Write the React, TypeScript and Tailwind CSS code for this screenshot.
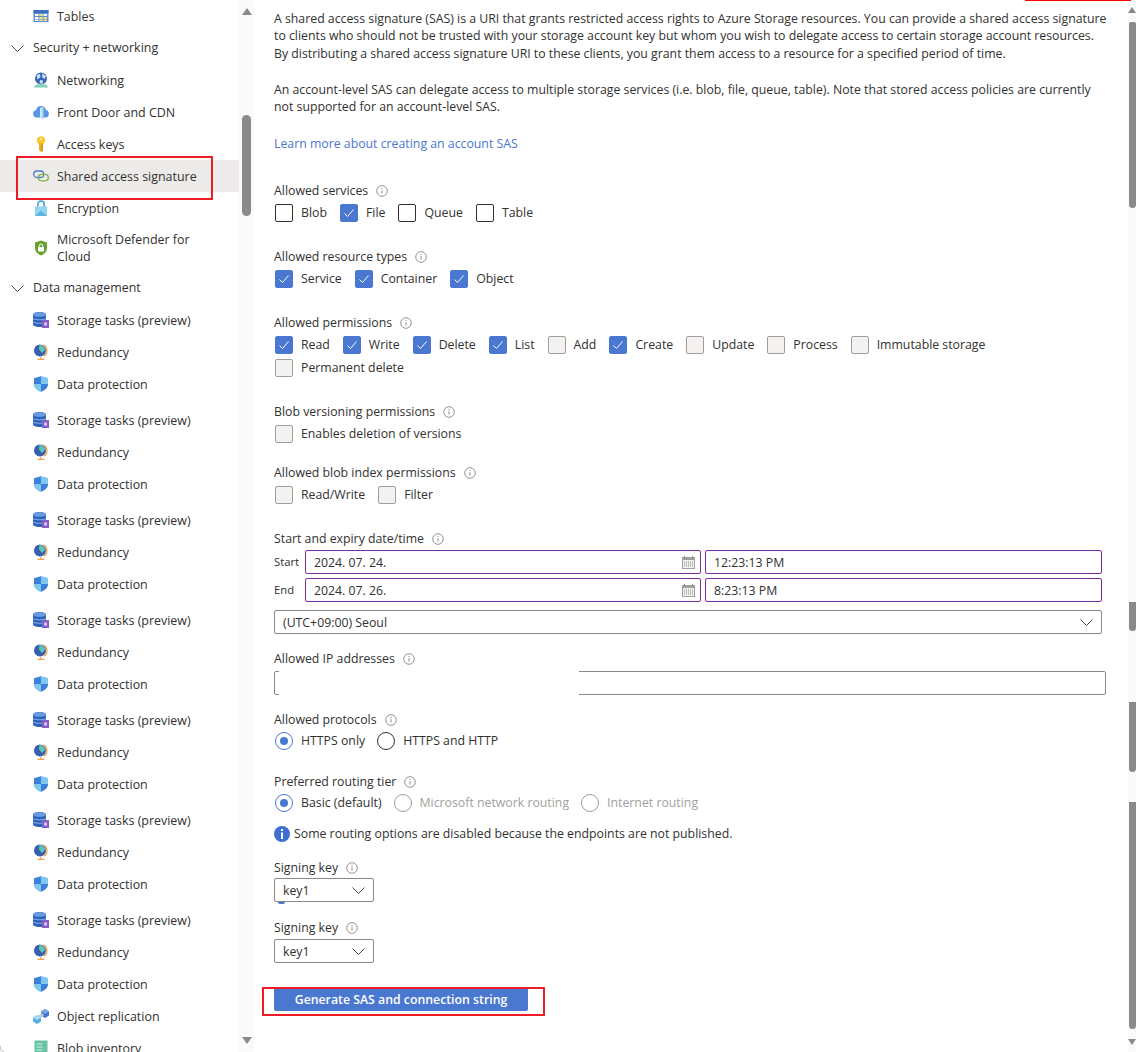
import React from 'react';

const font = "font-['Open_Sans','Liberation_Sans',sans-serif]";

function TablesIcon() {
  return (
    <svg width="16" height="16" viewBox="0 0 16 16">
      <rect x="0.500" y="2" width="15" height="12" fill="#5b8fd8" />
      <rect x="0.500" y="2" width="15" height="3" fill="#3f6fc4" />
      <g fill="#fff">
        <rect x="2" y="6" width="3.500" height="2" />
        <rect x="10.500" y="6" width="3.500" height="2" />
        <rect x="2" y="9" width="3.500" height="2" />
        <rect x="2" y="11.500" width="3.500" height="1.500" />
      </g>
      <g fill="#f5dd7a">
        <rect x="6.200" y="6" width="3.600" height="2" />
        <rect x="6.200" y="9" width="3.600" height="2" />
        <rect x="10.500" y="9" width="3.500" height="2" />
        <rect x="6.200" y="11.500" width="3.600" height="1.500" />
        <rect x="10.500" y="11.500" width="3.500" height="1.500" />
      </g>
    </svg>
  );
}

function NetworkingIcon() {
  return (
    <svg width="16" height="16" viewBox="0 0 16 16">
      <path d="M3 12.500h10l2.500 3H.5z" fill="#7fd0b8" />
      <circle cx="8" cy="6.500" r="6" fill="#3465b8" />
      <path d="M3.500 3l3.500-1 .5 3-3 2.500zM9.500 1.500l3.500 2.500-1.500 3-2.500-2zM7 8l3 .5-.5 3.500-3-1z" fill="#cfe2f6" />
    </svg>
  );
}

function FrontDoorIcon() {
  return (
    <svg width="16" height="16" viewBox="0 0 16 16">
      <path d="M4 13.500a3.800 3.800 0 0 1-.9-7.500 5 5 0 0 1 9.800 0 3.800 3.800 0 0 1-.9 7.500z" fill="#5a96e3" />
      <path d="M7 4l3.500-1.500v13L7 13.500z" fill="#a8dcf7" />
      <path d="M7 4l1.200-.5v10.500L7 13.500z" fill="#d6f0fc" />
    </svg>
  );
}

function KeyIcon() {
  return (
    <svg width="16" height="16" viewBox="0 0 16 16">
      <circle cx="8" cy="4.500" r="4.200" fill="#f7c82f" />
      <circle cx="8" cy="3" r="1.100" fill="#fff4c9" />
      <path d="M6 7h4v7l-2 2-2-2z" fill="#eeb21f" />
      <path d="M8 8h2v7l-2 1z" fill="#dd9c12" />
    </svg>
  );
}

function LinkIcon() {
  return (
    <svg width="16" height="16" viewBox="0 0 16 16" fill="none">
      <rect x="0.700" y="3" width="10" height="6.500" rx="3.200" stroke="#4a7bd0" strokeWidth="1.300" />
      <rect x="5.300" y="6.300" width="10" height="6.500" rx="3.200" stroke="#7cb342" strokeWidth="1.300" />
    </svg>
  );
}

function LockIcon() {
  return (
    <svg width="16" height="16" viewBox="0 0 16 16">
      <path d="M4.800 7V4.300a3.200 3.200 0 0 1 6.400 0V7" fill="none" stroke="#4fa3dc" strokeWidth="1.600" />
      <rect x="2" y="6.500" width="12" height="9.500" rx="0.500" fill="#93d4f0" />
      <path d="M2 16L8 10.500 14 16z" fill="#5db4e0" />
    </svg>
  );
}

function DefenderIcon() {
  return (
    <svg width="16" height="16" viewBox="0 0 16 16">
      <path d="M8 .5l6 2v5.500c0 3.800-2.800 6.200-6 7.500-3.200-1.300-6-3.700-6-7.500V2.500z" fill="#6aa032" />
      <rect x="5" y="7" width="6" height="4.500" rx="0.500" fill="#fff" />
      <path d="M6.300 7V5.700a1.700 1.700 0 0 1 3.400 0V7" fill="none" stroke="#fff" strokeWidth="1" />
    </svg>
  );
}

function StorageTasksIcon() {
  return (
    <svg width="16" height="16" viewBox="0 0 16 16">
      <path d="M0 2.500C0 1.200 2.900 0 6.500 0S13 1.200 13 2.500v10c0 1.300-2.900 2.500-6.500 2.500S0 13.800 0 12.500z" fill="#2f62bd" />
      <ellipse cx="6.500" cy="2.500" rx="6.500" ry="2.300" fill="#6b9be0" />
      <path d="M0 6.500c1.200 1.700 11.800 1.700 13 0M0 10c1.200 1.700 11.800 1.700 13 0" fill="none" stroke="#a6c4ee" strokeWidth="0.800" />
      <rect x="9" y="8" width="7" height="8" fill="#8661c5" />
      <rect x="11.200" y="10.500" width="2.800" height="3" fill="#d9c8f0" />
    </svg>
  );
}

function GlobeIcon() {
  return (
    <svg width="16" height="16" viewBox="0 0 16 16">
      <circle cx="7" cy="6.500" r="6" fill="#3a5fae" />
      <path d="M6.500 1c3.500 0 5.500 2.200 5.500 5l-3 3-3-3.500z" fill="#5fc4b6" />
      <path d="M10.500 .8a6.800 6.800 0 0 1 .5 11.500" fill="none" stroke="#f2a44a" strokeWidth="1.200" />
      <path d="M8 13v1.800M4.500 15.300h7" stroke="#f2a44a" strokeWidth="1.300" />
    </svg>
  );
}

function ShieldIcon() {
  return (
    <svg width="16" height="16" viewBox="0 0 16 16">
      <path d="M8 .2l7 2v6c0 3.600-3.100 6.100-7 7.600-3.900-1.500-7-4-7-7.600v-6z" fill="#3c7fdc" />
      <path d="M8 .2l7 2V8H8zM8 8v7.800C4.100 14.300 1 11.700 1 8z" fill="#7fc8f2" />
    </svg>
  );
}

function ReplicationIcon() {
  return (
    <svg width="16" height="16" viewBox="0 0 16 16">
      <path d="M8 3.500L12 1l4 2.500v4L12 10 8 7.500z" fill="#3f74cc" />
      <path d="M12 1l4 2.500L12 6 8 3.500z" fill="#7aa6e6" />
      <path d="M0 9.500L4 7l4 2.500v4L4 16l-4-2.500z" fill="#58aee6" />
      <path d="M4 7l4 2.500L4 12 0 9.500z" fill="#a6dcf5" />
      <path d="M5 8l4-3 2 2.500-4 3z" fill="#b8c8de" />
    </svg>
  );
}

function InventoryIcon() {
  return (
    <svg width="16" height="16" viewBox="0 0 16 16">
      <rect x="1.500" y="0.500" width="13" height="13" fill="#67c2a6" />
      <path d="M3.500 4h6M3.500 7h6M3.500 10h6" stroke="#d8f2e8" strokeWidth="1.200" />
      <rect x="0" y="13" width="16" height="3" fill="#4a7fd4" />
    </svg>
  );
}

function Chevron({ className = '' }: { className?: string }) {
  return (
    <svg width="13" height="7" viewBox="0 0 13 7" fill="none" className={className}>
      <path d="M.5.500l6 6 6-6" stroke="#323130" strokeWidth="0.900" />
    </svg>
  );
}

function NavItem({ icon, label, active, tall }: { icon: React.ReactNode; label: string; active?: boolean; tall?: boolean }) {
  return (
    <div className={`flex items-center pl-[33px] ${tall ? 'h-[48px]' : 'h-8'} ${active ? 'bg-[#edebe9]' : ''}`}>
      <span className="w-6 shrink-0">{icon}</span>
      <span className={`text-[12.45px] leading-[17px] text-[#323130] ${tall ? 'w-[140px]' : ''}`}>{label}</span>
    </div>
  );
}

function NavGroup({ label }: { label: string }) {
  return (
    <div className="flex items-center h-8 pl-[11px] text-[12.45px] text-[#323130]">
      <Chevron className="mr-[9px]" />
      {label}
    </div>
  );
}

function DataTrio() {
  return (
    <div className="mb-1">
      <NavItem icon={<StorageTasksIcon />} label="Storage tasks (preview)" />
      <NavItem icon={<GlobeIcon />} label="Redundancy" />
      <NavItem icon={<ShieldIcon />} label="Data protection" />
    </div>
  );
}

function Info() {
  return (
    <svg width="12" height="12" viewBox="0 0 12 12" fill="none" className="ml-[8px] shrink-0">
      <circle cx="6" cy="6" r="5.300" stroke="#8a8886" strokeWidth="0.900" />
      <path d="M6 5.200v3.300" stroke="#8a8886" />
      <path d="M6 3v1.100" stroke="#8a8886" />
    </svg>
  );
}

function Label({ children, className = '' }: { children: React.ReactNode; className?: string }) {
  return (
    <div className={`flex items-center h-[17px] text-[12.3px] text-[#323130] ${className}`}>
      {children}
      <Info />
    </div>
  );
}

function Check({ label, state }: { label: string; state: 'on' | 'off' | 'disabled' }) {
  const box =
    state === 'on'
      ? 'bg-[#4a77d0] border-[#4a77d0]'
      : state === 'off'
        ? 'bg-white border-[#323130]'
        : 'bg-[#f3f2f1] border-[#a19f9d]';
  return (
    <div className="flex items-center pl-px">
      <span className={`flex items-center justify-center w-[18px] h-[18px] rounded-[2px] border ${box}`}>
        {state === 'on' && (
          <svg width="12" height="12" viewBox="0 0 12 12" fill="none">
            <path d="M1.500 6.500l3 3 6-7" stroke="#fff" strokeWidth="1" />
          </svg>
        )}
      </span>
      <span className="ml-[8px] text-[12.3px] text-[#323130]">{label}</span>
    </div>
  );
}

function Radio({ label, state }: { label: string; state: 'on' | 'off' | 'disabled' }) {
  const ring = state === 'on' ? 'border-[#4a77d0]' : state === 'off' ? 'border-[#323130]' : 'border-[#a19f9d]';
  return (
    <div className="flex items-center pl-px">
      <span className={`flex items-center justify-center w-[18px] h-[18px] rounded-full border ${ring}`}>
        {state === 'on' && <span className="w-[8px] h-[8px] rounded-full bg-[#4a77d0]" />}
      </span>
      <span className={`ml-[8px] text-[12.3px] ${state === 'disabled' ? 'text-[#a19f9d]' : 'text-[#323130]'}`}>{label}</span>
    </div>
  );
}

function CalendarIcon() {
  return (
    <svg width="13" height="13" viewBox="0 0 13 13" fill="none" className="mr-[5px]">
      <rect x="0.500" y="1.500" width="12" height="11" fill="#f3f2f1" stroke="#a19f9d" />
      <rect x="0.500" y="1.500" width="12" height="2.500" fill="#a19f9d" />
      <path d="M2.500 0v2M10.500 0v2" stroke="#8a8886" />
      <path d="M2 6h9M2 8h9M2 10h9" stroke="#8a8886" strokeDasharray="1 1" />
    </svg>
  );
}

function DateField({ value }: { value: string }) {
  return (
    <div className="flex items-center justify-between w-[396px] h-6 pl-2 border border-[#7a2da0] rounded-[2px] text-[12.3px] text-[#323130]">
      <span className="pt-px">{value}</span>
      <CalendarIcon />
    </div>
  );
}

function TimeField({ value }: { value: string }) {
  return (
    <div className="flex items-center w-[397px] h-6 pl-2 ml-1 border border-[#7a2da0] rounded-[2px] text-[12.3px] text-[#323130]">
      <span className="pt-px">{value}</span>
    </div>
  );
}

function Select({ value, className }: { value: string; className: string }) {
  return (
    <div className={`flex items-center justify-between h-6 pl-2 pr-2 border border-[#8a8886] rounded-[2px] text-[12.3px] text-[#323130] ${className}`}>
      <span className="pt-px">{value}</span>
      <Chevron />
    </div>
  );
}

export default function App() {
  return (
    <div className={`relative flex h-[1052px] w-[1136px] overflow-hidden bg-white ${font}`}>
      {/* resource menu */}
      <aside className="w-[239px] shrink-0 h-full overflow-hidden">
        <NavItem icon={<TablesIcon />} label="Tables" />
        <NavGroup label="Security + networking" />
        <NavItem icon={<NetworkingIcon />} label="Networking" />
        <NavItem icon={<FrontDoorIcon />} label="Front Door and CDN" />
        <NavItem icon={<KeyIcon />} label="Access keys" />
        <NavItem icon={<LinkIcon />} label="Shared access signature" active />
        <NavItem icon={<LockIcon />} label="Encryption" />
        <NavItem icon={<DefenderIcon />} label="Microsoft Defender for Cloud" tall />
        <NavGroup label="Data management" />
        <DataTrio />
        <DataTrio />
        <DataTrio />
        <DataTrio />
        <DataTrio />
        <DataTrio />
        <DataTrio />
        <div className="-mt-1">
          <NavItem icon={<ReplicationIcon />} label="Object replication" />
          <NavItem icon={<InventoryIcon />} label="Blob inventory" />
        </div>
      </aside>

      {/* menu scrollbar */}
      <div className="relative w-[15px] shrink-0 bg-[#fafafa]">
        <div className="absolute left-[3px] top-[8px] w-0 h-0 border-x-[5px] border-x-transparent border-b-[7px] border-b-[#8a8a8a]" />
        <div className="absolute left-[3px] top-[115px] w-[9px] h-[101px] rounded-full bg-[#8a8a8a]" />
        <div className="absolute left-[3px] top-[1037px] w-0 h-0 border-x-[5px] border-x-transparent border-t-[7px] border-t-[#8a8a8a]" />
      </div>

      {/* SAS form */}
      <main className="relative flex-1 pl-5 pt-[9.500px] pr-5">
        <p className="text-[12.3px] leading-[17.500px] text-[#323130]">
          A shared access signature (SAS) is a URI that grants restricted access rights to Azure Storage resources. You can provide a shared access signature to clients who should not be trusted with your storage account key but whom you wish to delegate access to certain storage account resources. By distributing a shared access signature URI to these clients, you grant them access to a resource for a specified period of time.
        </p>
        <p className="mt-[18.500px] text-[12.3px] leading-[17.500px] text-[#323130]">
          An account-level SAS can delegate access to multiple storage services (i.e. blob, file, queue, table). Note that stored access policies are currently not supported for an account-level SAS.
        </p>
        <p className="mt-[19px] text-[12.3px] leading-[17px] text-[#4a77d0]">Learn more about creating an account SAS</p>

        <Label className="mt-[31px]">Allowed services</Label>
        <div className="flex gap-[12px] mt-[4px] h-[19px]">
          <Check label="Blob" state="off" />
          <Check label="File" state="on" />
          <Check label="Queue" state="off" />
          <Check label="Table" state="off" />
        </div>

        <Label className="mt-[26px]">Allowed resource types</Label>
        <div className="flex gap-[12px] mt-[4px] h-[19px]">
          <Check label="Service" state="on" />
          <Check label="Container" state="on" />
          <Check label="Object" state="on" />
        </div>

        <Label className="mt-[26px]">Allowed permissions</Label>
        <div className="flex flex-wrap gap-x-[12px] gap-y-[5px] mt-[4px] w-[760px]">
          <Check label="Read" state="on" />
          <Check label="Write" state="on" />
          <Check label="Delete" state="on" />
          <Check label="List" state="on" />
          <Check label="Add" state="disabled" />
          <Check label="Create" state="on" />
          <Check label="Update" state="disabled" />
          <Check label="Process" state="disabled" />
          <Check label="Immutable storage" state="disabled" />
          <Check label="Permanent delete" state="disabled" />
        </div>

        <Label className="mt-[26px]">Blob versioning permissions</Label>
        <div className="flex mt-[4px] h-[19px]">
          <Check label="Enables deletion of versions" state="disabled" />
        </div>

        <Label className="mt-[21px]">Allowed blob index permissions</Label>
        <div className="flex gap-[12px] mt-[4px] h-[19px]">
          <Check label="Read/Write" state="disabled" />
          <Check label="Filter" state="disabled" />
        </div>

        <Label className="mt-[26px]">Start and expiry date/time</Label>
        <div className="flex items-center mt-[3px]">
          <span className="w-[31px] text-[11.300px] text-[#323130]">Start</span>
          <DateField value="2024. 07. 24." />
          <TimeField value="12:23:13 PM" />
        </div>
        <div className="flex items-center mt-[4px]">
          <span className="w-[31px] text-[11.300px] text-[#323130]">End</span>
          <DateField value="2024. 07. 26." />
          <TimeField value="8:23:13 PM" />
        </div>
        <Select value="(UTC+09:00) Seoul" className="mt-2 w-[828px]" />

        <Label className="mt-[16px]">Allowed IP addresses</Label>
        <div className="relative mt-[4px] w-[832px] h-6 border border-[#8a8886] rounded-[2px]">
          {/* masked value */}
          <div className="absolute left-1 -top-px -bottom-px w-[300px] bg-white" />
        </div>

        <Label className="mt-[16px]">Allowed protocols</Label>
        <div className="flex gap-[11px] mt-[3px] h-[19px]">
          <Radio label="HTTPS only" state="on" />
          <Radio label="HTTPS and HTTP" state="off" />
        </div>

        <Label className="mt-[23px]">Preferred routing tier</Label>
        <div className="flex gap-[11px] mt-[3px] h-[19px]">
          <Radio label="Basic (default)" state="on" />
          <Radio label="Microsoft network routing" state="disabled" />
          <Radio label="Internet routing" state="disabled" />
        </div>

        <div className="flex items-center mt-[13px] h-[18px] text-[12.3px] text-[#323130]">
          <span className="flex items-center justify-center w-4 h-4 mr-1 rounded-full bg-[#3f6fd1]">
            <svg width="4" height="10" viewBox="0 0 4 10" fill="#fff">
              <rect x="1" y="0" width="2" height="2" />
              <rect x="1" y="3.500" width="2" height="6.500" />
            </svg>
          </span>
          Some routing options are disabled because the endpoints are not published.
        </div>

        <Label className="mt-[16px]">Signing key</Label>
        <div className="relative">
          <Select value="key1" className="mt-[2px] w-[100px]" />
          <div className="absolute left-[4px] -bottom-[2px] w-[7px] h-[2px] rounded-b-full bg-[#4a77d0]" />
        </div>

        <Label className="mt-[17px]">Signing key</Label>
        <Select value="key1" className="mt-[3px] w-[100px]" />

        <button className="mt-[25px] flex items-center justify-center w-[254px] h-[23px] rounded-[2px] bg-[#4a77d0] text-[12.3px] font-semibold text-white">
          Generate SAS and connection string
        </button>
      </main>

      {/* page scrollbar */}
      <div className="relative w-2 shrink-0 bg-[#fafafa]">
        <div className="absolute right-0 top-[7px] w-0 h-0 border-x-[4px] border-x-transparent border-b-[6px] border-b-[#8a8a8a]" />
        <div className="absolute right-0 top-[22px] w-[7px] h-[186px] rounded-b-[4px] rounded-t-[2px] bg-[#8a8a8a]" />
        <div className="absolute right-0 top-[602px] w-[7px] h-[29px] rounded-b-[4px] bg-[#8a8a8a]" />
        <div className="absolute right-0 top-[702px] w-[7px] h-[70px] rounded-b-[4px] bg-[#8a8a8a]" />
        <div className="absolute right-0 top-[802px] w-[7px] h-[227px] rounded-b-[4px] bg-[#8a8a8a]" />
        <div className="absolute right-0 top-[1039px] w-0 h-0 border-x-[4px] border-x-transparent border-t-[6px] border-t-[#8a8a8a]" />
      </div>

      {/* annotation marks */}
      <div className="absolute left-[1025px] top-0 w-[106px] h-px bg-[#ff0000]" />
      <div className="absolute left-[16px] top-[156px] w-[197px] h-[44px] border-2 border-[#ed1c24]" />
      <div className="absolute left-[262px] top-[987px] w-[283px] h-[29px] border-2 border-[#ed1c24]" />
      <div className="absolute left-0 bottom-0 w-[4px] h-[6px] border-l border-b border-[#c8c8c8] rounded-bl-[4px]" />
    </div>
  );
}
